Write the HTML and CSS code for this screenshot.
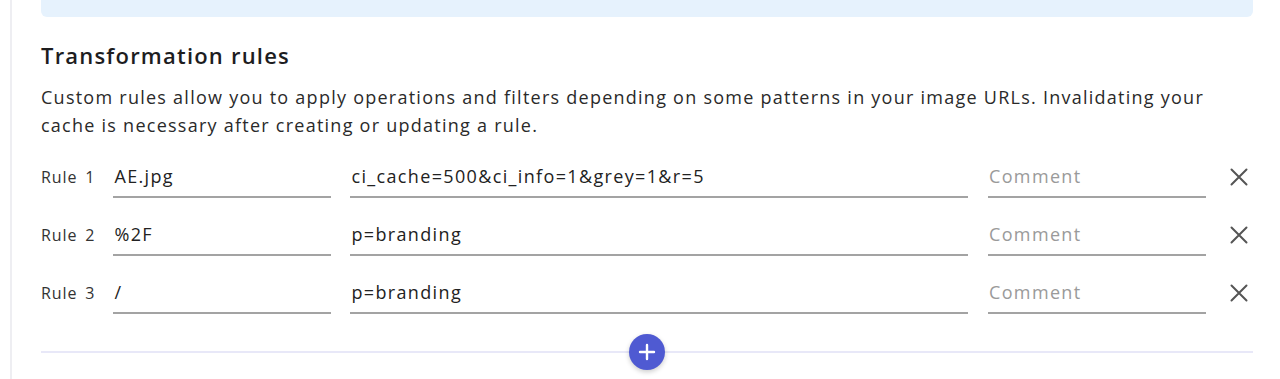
FILE: index.html
```html
<!DOCTYPE html>
<html lang="en">
<head>
    <meta charset="UTF-8">
    <meta name="viewport" content="width=device-width, initial-scale=1.0">
    <title>Transformation rules</title>
    <link rel="stylesheet" href="styles.css">
</head>
<body>
    <div class="panel">
        <div class="notice"></div>

        <h2>Transformation rules</h2>
        <p class="intro">Custom rules allow you to apply operations and filters depending on some patterns in your image URLs. Invalidating your cache is necessary after creating or updating a rule.</p>

        <div class="rules">
            <div class="rule">
                <span class="rule-label">Rule 1</span>
                <input class="field pattern" type="text" value="AE.jpg">
                <input class="field params" type="text" value="ci_cache=500&amp;ci_info=1&amp;grey=1&amp;r=5">
                <input class="field comment" type="text" placeholder="Comment">
                <button class="remove" title="Remove">
                    <svg width="18" height="18" viewBox="0 0 18 18"><path d="M1.5 1.5 L16.5 16.5 M16.5 1.5 L1.5 16.5" stroke="#555" stroke-width="2" stroke-linecap="round"/></svg>
                </button>
            </div>
            <div class="rule">
                <span class="rule-label">Rule 2</span>
                <input class="field pattern" type="text" value="%2F">
                <input class="field params" type="text" value="p=branding">
                <input class="field comment" type="text" placeholder="Comment">
                <button class="remove" title="Remove">
                    <svg width="18" height="18" viewBox="0 0 18 18"><path d="M1.5 1.5 L16.5 16.5 M16.5 1.5 L1.5 16.5" stroke="#555" stroke-width="2" stroke-linecap="round"/></svg>
                </button>
            </div>
            <div class="rule">
                <span class="rule-label">Rule 3</span>
                <input class="field pattern" type="text" value="/">
                <input class="field params" type="text" value="p=branding">
                <input class="field comment" type="text" placeholder="Comment">
                <button class="remove" title="Remove">
                    <svg width="18" height="18" viewBox="0 0 18 18"><path d="M1.5 1.5 L16.5 16.5 M16.5 1.5 L1.5 16.5" stroke="#555" stroke-width="2" stroke-linecap="round"/></svg>
                </button>
            </div>
        </div>

        <div class="add-row">
            <button class="add" title="Add rule">
                <svg width="18" height="18" viewBox="0 0 18 18"><path d="M9 2 V16 M2 9 H16" stroke="#fff" stroke-width="2.4" stroke-linecap="round"/></svg>
            </button>
        </div>
    </div>
</body>
</html>
```

FILE: styles.css
```css
body {
    margin: 0;
    padding: 0 0 0 10px;
    background-color: #fff;
    color: #222;
    font-family: 'Open Sans', 'Noto Sans', sans-serif;
}

.panel {
    border-left: 2px solid #eeeef2;
    padding: 0 27px 0 29px;
    height: 379px;
    overflow: hidden;
}

.notice {
    height: 17px;
    background-color: #e6f2fd;
    border-radius: 0 0 6px 6px;
}

h2 {
    font-size: 22px;
    font-weight: 600;
    letter-spacing: 1.2px;
    line-height: 30px;
    margin: 23px 0 0 0;
    color: #1d1d1f;
}

.intro {
    font-size: 18px;
    letter-spacing: 1.25px;
    line-height: 28px;
    margin: 13px 0 0 0;
    color: #2a2a2a;
}

.rules {
    margin-top: 9px;
}

.rule {
    display: flex;
    align-items: center;
    height: 58px;
}

.rule-label {
    font-size: 16px;
    letter-spacing: 0.9px;
    word-spacing: 3px;
    color: #333;
    margin-right: 18px;
    white-space: nowrap;
}

.field {
    font-family: inherit;
    font-size: 18px;
    letter-spacing: 1.35px;
    color: #222;
    border: none;
    border-bottom: 2px solid #a3a3a3;
    background: transparent;
    padding: 8px 0 8px 1px;
    outline: none;
}

.field::placeholder {
    color: #9a9a9a;
}

.pattern {
    width: 217px;
}

.params {
    flex: 1;
    min-width: 0;
    margin-left: 19px;
}

.comment {
    width: 217px;
    margin-left: 20px;
}

.remove {
    border: none;
    background: none;
    padding: 0;
    margin-left: 24px;
    margin-right: 5px;
    width: 18px;
    height: 18px;
    cursor: pointer;
}

.add-row {
    margin-top: 29px;
    border-top: 2px solid #e8e8f8;
    display: flex;
    justify-content: center;
}

.add {
    width: 36px;
    height: 36px;
    margin-top: -19px;
    border: none;
    border-radius: 50%;
    background-color: #4f5ad2;
    box-shadow: 0 2px 5px rgba(0, 0, 0, 0.2);
    display: flex;
    align-items: center;
    justify-content: center;
    padding: 0;
    cursor: pointer;
}
```
